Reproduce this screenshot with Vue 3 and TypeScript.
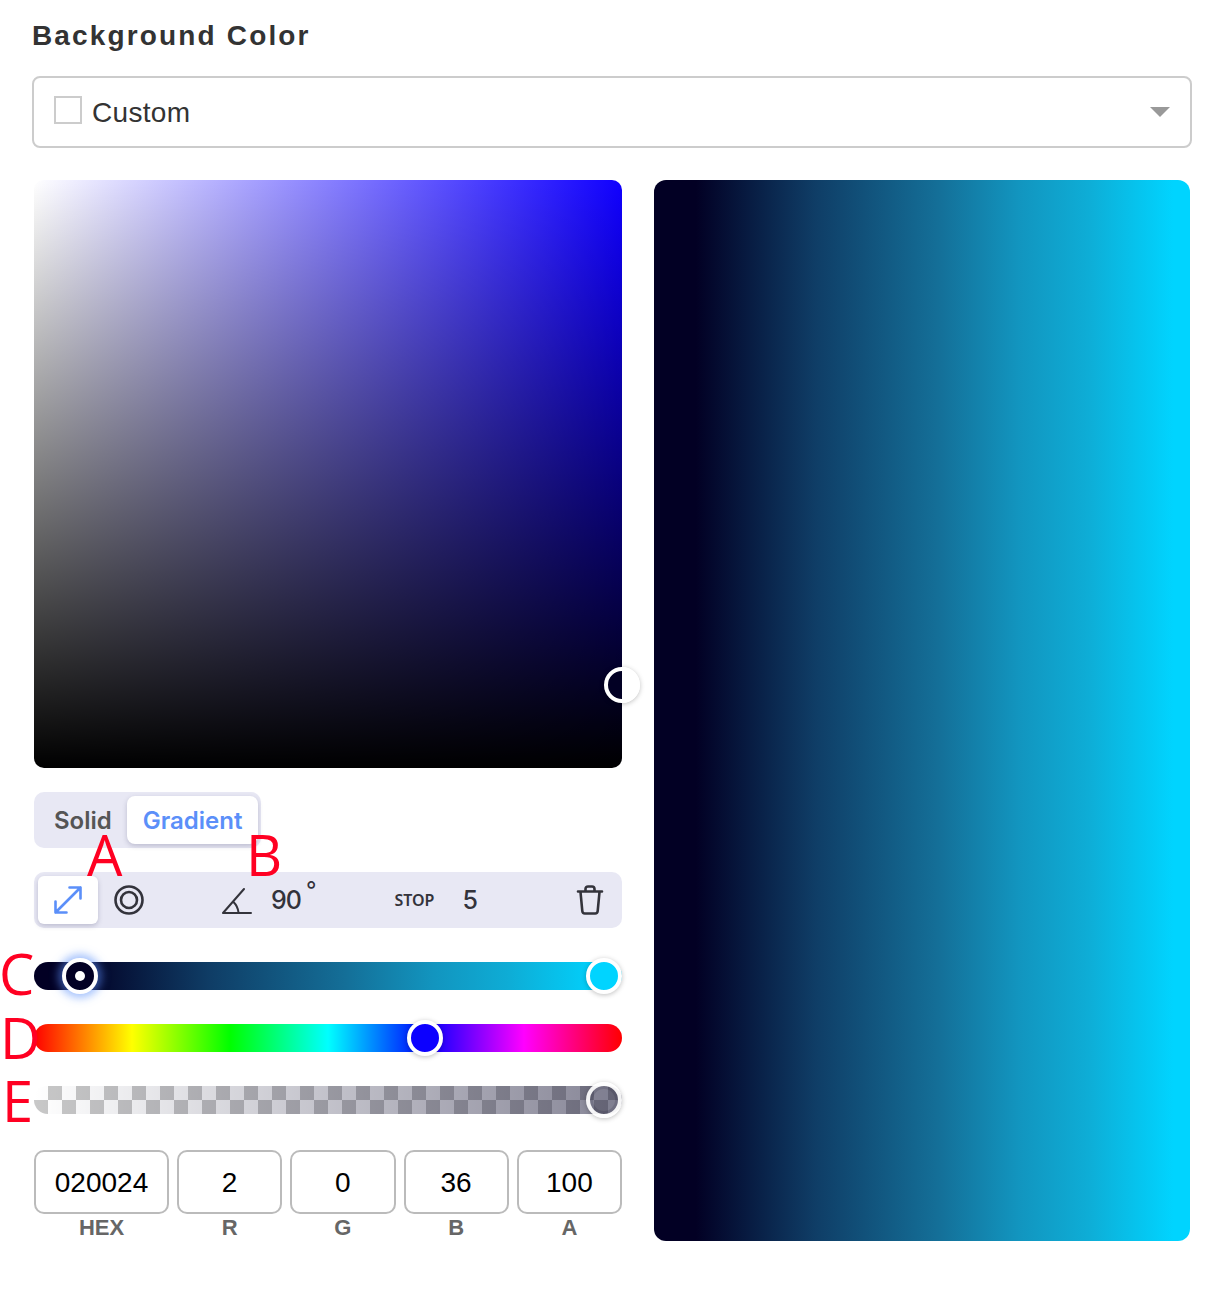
<script setup lang="ts">
import { ref } from 'vue'

const mode = ref('Gradient')
const stops = [
  { pos: 7.8, color: '#020024', active: true },
  { pos: 96.9, color: '#00d4ff', active: false },
]
const fields = [
  { label: 'HEX', value: '020024' },
  { label: 'R', value: '2' },
  { label: 'G', value: '0' },
  { label: 'B', value: '36' },
  { label: 'A', value: '100' },
]
const notes = ['A', 'B', 'C', 'D', 'E']
</script>

<template>
  <div class="page">
    <h2 class="title">Background Color</h2>
    <div class="select">
      <span class="swatch"></span>
      <span class="select-text">Custom</span>
      <span class="caret"></span>
    </div>

    <div class="picker">
      <div class="controls">
        <div class="square">
          <span class="knob square-knob"></span>
        </div>

        <div class="tabs">
          <button v-for="t in ['Solid', 'Gradient']" :key="t" type="button" class="tab" :class="{ on: t === mode }" @click="mode = t">{{ t }}</button>
        </div>

        <div class="toolbar">
          <button type="button" class="tool on">
            <svg width="32" height="32" viewBox="0 0 32 32" fill="none" stroke="#5b8ff9" stroke-width="2.6" stroke-linecap="round" stroke-linejoin="round"><path d="M3.500 28.500 28.500 3.500M17.500 3.500h11v11M3.500 17.500v11h11" /></svg>
          </button>
          <svg class="radial" width="30" height="30" viewBox="0 0 30 30" fill="none" stroke="#33333b" stroke-width="2.6"><circle cx="15" cy="15" r="13.500" /><circle cx="15" cy="15" r="8" /></svg>
          <svg class="angle" width="30" height="28" viewBox="0 0 30 28" fill="none" stroke="#33333b" stroke-width="2" stroke-linecap="round" stroke-linejoin="round"><path d="M22 2 1 26h28M11.500 15c2.500 2.500 4.500 6 5 10.500" /></svg>
          <span class="num deg">90</span>
          <span class="degree">°</span>
          <span class="stop-label">STOP</span>
          <span class="num stop-num">5</span>
          <svg class="trash" width="28" height="30" viewBox="0 0 28 30" fill="none" stroke="#33333b" stroke-width="2.600" stroke-linecap="round" stroke-linejoin="round"><path d="M2 6.500h24M4.500 7l1.800 19c.1 1.500 1.100 2.500 2.600 2.500h10.200c1.500 0 2.500-1 2.600-2.500L23.500 7M9.500 6V4c0-1.500 1-2.500 2.500-2.500h4c1.500 0 2.500 1 2.500 2.500v2" /></svg>
        </div>

        <div class="track stops blend">
          <span
            v-for="s in stops"
            :key="s.pos"
            class="knob"
            :class="{ active: s.active }"
            :style="{ left: `${s.pos}%`, background: s.color }"
          ></span>
        </div>
        <div class="track hue">
          <span class="knob hue-knob"></span>
        </div>
        <div class="track alpha">
          <span class="knob alpha-knob"></span>
        </div>

        <div class="fields">
          <div v-for="f in fields" :key="f.label" class="field">
            <div class="field-box"><span>{{ f.value }}</span></div>
            <div class="field-label">{{ f.label }}</div>
          </div>
        </div>
      </div>

      <div class="preview blend"></div>
    </div>

    <span v-for="n in notes" :key="n" class="note" :class="`note-${n}`">{{ n }}</span>
  </div>
</template>

<style scoped>
.page {
  position: relative; box-sizing: border-box; width: 1224px; height: 1294px; padding: 0 32px;
  background: #fff; font-family: "Liberation Sans", Arial, sans-serif; overflow: hidden;
}
.title {
  margin: 0; padding-top: 20px; height: 76px; box-sizing: border-box; font-size: 28px; line-height: 32px;
  font-weight: 700; letter-spacing: 2.15px; color: #333; white-space: nowrap;
}
.select {
  display: flex; align-items: center; box-sizing: border-box; width: 1160px; height: 72px; padding: 0 20px;
  border: 2px solid #ccc; border-radius: 8px;
}
.swatch { width: 28px; height: 28px; box-sizing: border-box; border: 2px solid #ccc; margin: -4px 10px 0 0; }
.select-text { font-size: 28px; letter-spacing: .3px; color: #333; margin-top: 2px; }
.caret { margin-left: auto; border-left: 10px solid transparent; border-right: 10px solid transparent; border-top: 10px solid #999; }

.picker { display: flex; gap: 32px; padding: 32px 2px 0; }
.controls { width: 588px; flex: none; display: flex; flex-direction: column; }
.preview { width: 536px; height: 1061px; border-radius: 12px; }
.blend {
  background: linear-gradient(90deg, #020024 7.8%, #0f3d66 30%, #146f98 53%, #1295bf 68%, #0eadd6 81%, #00d4ff 96.9%);
}
.square {
  position: relative; width: 588px; height: 588px; border-radius: 10px;
  background: linear-gradient(to top, #000, transparent), linear-gradient(to right, #fff, #1000ff);
}
.knob {
  position: absolute; top: 50%; width: 36px; height: 36px; box-sizing: border-box; border: 4px solid #fff; border-radius: 50%;
  transform: translate(-50%, -50%); box-shadow: 0 1px 5px rgba(0, 0, 0, .25);
}
.square-knob { left: 100%; top: 505px; background: linear-gradient(90deg, #020024 50%, #fff 50%); }
.knob.active { box-shadow: 0 0 8px 4px rgba(91, 143, 249, .55); }
.knob.active::after {
  content: ""; position: absolute; left: 50%; top: 50%; width: 10px; height: 10px; border-radius: 50%; background: #fff;
  transform: translate(-50%, -50%);
}

.tabs { display: flex; align-self: flex-start; box-sizing: border-box; height: 56px; margin-top: 24px; padding: 4px 3px 4px 4px; background: #e8e8f4; border-radius: 10px; }
.tab {
  border: none; background: none; padding: 0 16px; font: 600 24px "Inter", sans-serif; color: #555; border-radius: 8px; cursor: pointer;
}
.tab:first-child { padding-right: 15px; }
.tab.on { background: #fff; color: #5b8ff9; box-shadow: 0 2px 5px rgba(60, 60, 100, .25); }

.toolbar { display: flex; align-items: center; height: 56px; margin-top: 24px; padding: 0 18px 0 4px; background: #e8e8f4; border-radius: 10px; }
.tool { display: flex; align-items: center; justify-content: center; width: 60px; height: 48px; padding: 0; border: none; background: none; border-radius: 6px; }
.tool.on { background: #fff; box-shadow: 0 2px 5px rgba(60, 60, 100, .25); }
.radial { margin-left: 16px; }
.angle { margin-left: 78px; margin-top: 2px; }
.num { font: 500 25px "Inter", sans-serif; color: #33333b; }
.deg { margin-left: 19px; letter-spacing: -1px; }
.degree { margin: -20px 0 0 5px; font: 400 23px "Inter", sans-serif; color: #33333b; }
.stop-label { margin-left: 78px; font: 600 16px "Noto Sans", sans-serif; color: #33333b; }
.stop-num { margin-left: 28px; }
.trash { margin-left: auto; }

.track { position: relative; height: 28px; border-radius: 14px; }
.stops { margin-top: 34px; }
.hue {
  margin-top: 34px;
  background: linear-gradient(90deg, #f00, #ff0 16.66%, #0f0 33.33%, #0ff 50%, #00f 66.66%, #f0f 83.33%, #f00);
}
.hue-knob { left: 66.5%; background: #0c00ff; }
.alpha {
  margin-top: 34px;
  background:
    linear-gradient(90deg, rgba(2, 0, 36, 0), rgba(2, 0, 36, .48)),
    conic-gradient(#c8c8c8 25%, #fff 0 50%, #c8c8c8 0 75%, #fff 0) 0 0 / 28px 28px;
}
.alpha-knob { left: 96.9%; background: rgba(2, 0, 36, .06); border-color: rgba(255, 255, 255, .92); box-shadow: inset 0 0 0 3px rgba(2, 0, 36, .12), 0 1px 5px rgba(0, 0, 0, .25); }

.fields { display: grid; grid-template-columns: 135px repeat(4, 1fr); gap: 8px; margin-top: 36px; }
.field { display: flex; flex-direction: column; align-items: stretch; }
.field-box {
  display: flex; align-items: center; justify-content: center; box-sizing: border-box; height: 64px;
  border: 2px solid #bbb; border-radius: 10px; font-size: 28px; color: #000;
}
.field-box span { margin-top: 2px; }
.field-label { margin-top: 1px; text-align: center; font-size: 22px; line-height: 26px; font-weight: 700; color: #666; }

.note { position: absolute; font: 400 56px/56px "Open Sans", sans-serif; color: #ff0022; pointer-events: none; }
.note-A { left: 87px; top: 826px; }
.note-B { left: 246px; top: 826px; }
.note-C { left: -1px; top: 945px; }
.note-D { left: 0; top: 1009px; }
.note-E { left: 2px; top: 1072px; }
</style>
